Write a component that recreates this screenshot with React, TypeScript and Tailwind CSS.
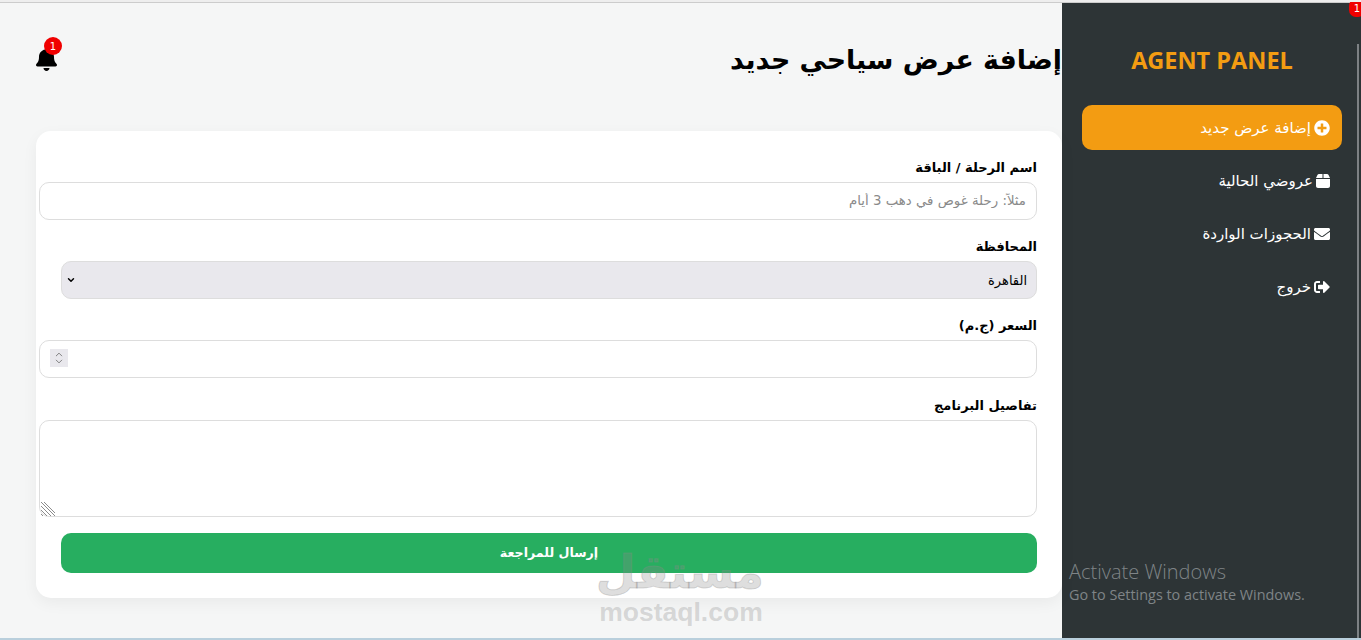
import { ChevronDown, ChevronUp } from "lucide-react";
import { FaBell, FaEnvelope, FaPlusCircle, FaSignOutAlt } from "react-icons/fa";
import { FaBox } from "react-icons/fa6";

const menu = [
  { id: 1, label: "إضافة عرض جديد", icon: FaPlusCircle, active: true },
  { id: 2, label: "عروضي الحالية", icon: FaBox, active: false },
  { id: 3, label: "الحجوزات الواردة", icon: FaEnvelope, active: false },
  { id: 4, label: "خروج", icon: FaSignOutAlt, active: false },
];

const inputClass =
  "box-content block w-full h-4 px-2.5 py-2.5 bg-white border border-[#dddddd] rounded-[10px] text-[13.33px] outline-none placeholder:text-[#8a8a8a]";
const labelClass = "block mb-[3px] text-[13px] font-bold leading-[22px] text-black";

function Sidebar() {
  return (
    <aside className="relative w-[299px] shrink-0 bg-[#2d3436] pl-5 pr-[19px] pt-[41px]">
      <h2 dir="ltr" className="text-center text-[23.5px] leading-[32px] font-bold text-[#f39c12] font-['Open_Sans',sans-serif]">
        AGENT PANEL
      </h2>
      <nav className="mt-[29px] flex flex-col gap-2">
        {menu.map((item) => {
          const Icon = item.icon;
          return (
            <a
              key={item.id}
              className={`flex h-[45px] items-center gap-[3px] rounded-[10px] px-3 text-[15px] text-white ${
                item.active ? "bg-[#f39c12]" : ""
              }`}
            >
              <Icon className={item.id === 2 ? "h-4 w-3.5 shrink-0" : "h-4 w-4 shrink-0"} />
              <span className="pt-0.5">{item.label}</span>
            </a>
          );
        })}
      </nav>
      <span className="absolute right-0 top-[41px] bottom-0 w-0.5 mr-0.5 bg-[#7d8184]" />
      <span className="absolute -top-1 -right-1 flex h-[18px] w-4 items-center justify-center rounded-[7px] bg-[#f00000] text-[10px] text-white">
        1
      </span>
      <div dir="ltr" className="absolute left-[7px] top-[557px] text-[#7f8487] font-['Open_Sans',sans-serif]">
        <p className="text-[20px] leading-[24px] font-light">Activate Windows</p>
        <p className="text-[14.4px] leading-[21px]">Go to Settings to activate Windows.</p>
      </div>
    </aside>
  );
}

function Form() {
  return (
    <form className="relative flex flex-col rounded-[15px] bg-white px-[25px] pt-[26px] pb-[25px] shadow-[0_5px_15px_rgba(0,0,0,0.05)]">
      <label className={labelClass}>اسم الرحلة / الباقة</label>
      <input className={inputClass} placeholder="مثلاً: رحلة غوص في دهب 3 أيام" />

      <label className={`${labelClass} mt-4`}>المحافظة</label>
      <div className="relative">
        <select className="block h-[38px] w-full appearance-none rounded-[10px] border border-[#dddddd] bg-[#e9e8ed] pl-2.5 pr-[9px] pt-0.5 text-[13px] text-black">
          <option>القاهرة</option>
        </select>
        <ChevronDown strokeWidth={3.5} className="absolute left-[5px] top-[14px] h-2.5 w-2.5 text-black" />
      </div>

      <label className={`${labelClass} mt-4`}>السعر (ج.م)</label>
      <div className="relative">
        <input type="number" className={inputClass} />
        <span className="absolute left-[-11px] top-[9px] flex h-[18px] w-[18px] flex-col items-center justify-center bg-[#e9e8ed] text-[#777777]">
          <ChevronUp className="h-3 w-3 -mb-0.5" />
          <ChevronDown className="h-3 w-3 -mt-0.5" />
        </span>
      </div>

      <label className={`${labelClass} mt-[17px]`}>تفاصيل البرنامج</label>
      <div className="relative">
        <textarea className="box-content block h-[75px] w-full resize-none rounded-[10px] border border-[#dddddd] bg-white px-2.5 py-2.5 text-xs outline-none" />
        <svg viewBox="0 0 15 15" className="absolute -left-[21px] bottom-0 h-[15px] w-[15px] text-[#8c8c8c]" stroke="currentColor" strokeWidth="1">
          <path d="M1 0L15 14M1 4L11 14M1 8L7 14M4 0L15 11M1 12L3 14" />
        </svg>
      </div>

      <button
        type="button"
        className="mt-4 h-10 w-full rounded-[10px] bg-[#27ae60] text-[12.6px] font-bold text-white"
      >
        إرسال للمراجعة
      </button>
    </form>
  );
}

export default function App() {
  return (
    <div dir="rtl" className="relative h-[640px] w-full overflow-hidden border-t-2 border-b-2 border-t-[#eeeeee] border-b-[#b9cfdc] bg-[#f5f6f6] font-['DejaVu_Sans',sans-serif]">
      <div className="flex h-full border-t border-t-[#cccccc]">
        <Sidebar />
        <main className="flex-1 pl-9">
          <header className="flex h-[128px] items-start justify-between">
            <h1 className="mt-[37px] text-[26.8px] leading-[40px] font-bold text-black">إضافة عرض سياحي جديد</h1>
            <div className="relative mt-[44px] h-6 w-[21px]">
              <FaBell className="h-6 w-[21px] text-black" />
              <span className="absolute -top-[10px] left-[8px] flex h-[18px] w-[18px] items-center justify-center rounded-full bg-[#f00000] text-[10px] text-white">
                1
              </span>
            </div>
          </header>
          <Form />
        </main>
      </div>
      <div dir="ltr" className="pointer-events-none absolute left-[598px] top-[544px] w-[166px] text-center text-[#8a8a8a]/30">
        <p dir="rtl" className="text-[46px] leading-[52px] font-bold [-webkit-text-stroke:1px_rgba(138,138,138,0.3)]">مستقل</p>
        <p className="text-[26.5px] leading-[28px] font-bold font-['Liberation_Sans',sans-serif]">mostaql.com</p>
      </div>
    </div>
  );
}
